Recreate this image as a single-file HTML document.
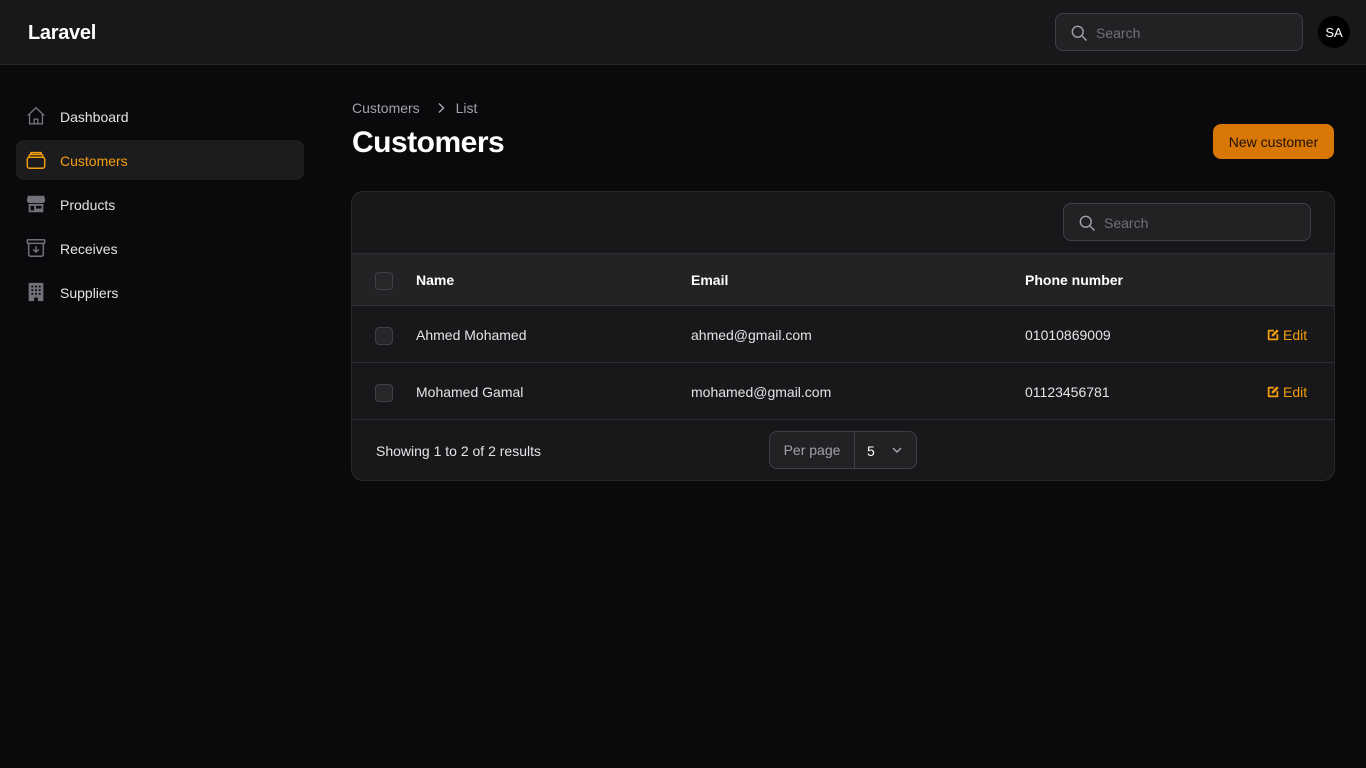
<!DOCTYPE html>
<html><head><meta charset="utf-8">
<style>
*{box-sizing:border-box;margin:0;padding:0}
body{width:1366px;height:768px;background:#0a0a0c;font-family:"Liberation Sans",sans-serif;color:#fff;position:relative;overflow:hidden;font-size:14px}
.top{position:absolute;left:0;top:0;width:1366px;height:65px;background:#18181b;border-bottom:1px solid #27272a}
.logo{position:absolute;left:28px;top:22px;font-size:20px;font-weight:bold;letter-spacing:-0.3px}
.tsearch{position:absolute;left:1055px;top:13px;width:248px;height:38px;border:1px solid #3f3f46;border-radius:8px;background:#222225}
.ph{position:absolute;color:#71717a;font-size:14px}
.av{position:absolute;left:1318px;top:16px;width:32px;height:32px;border-radius:50%;background:#000;font-size:13px;text-align:center;line-height:33px}
.nav{position:absolute;left:16px;width:288px;height:40px;border-radius:8px}
.nav span{position:absolute;left:44px;top:13px;font-size:14px;color:#e4e4e7}
.nav svg{position:absolute;left:9px;top:9px}
.crumb{position:absolute;left:352px;top:100px;color:#a1a1aa;font-size:14px}
h1{position:absolute;left:352px;top:126px;font-size:30px;font-weight:bold;letter-spacing:-0.5px}
.btn{position:absolute;left:1213px;top:124px;width:121px;height:35px;background:#d97706;border-radius:8px;color:#1c1005;font-size:14px;text-align:center;line-height:37px}
.card{position:absolute;left:351px;top:191px;width:984px;height:290px;background:#18181b;border:1px solid #27272a;border-radius:12px;overflow:hidden}
.hdr{position:absolute;left:0;top:61px;width:100%;height:53px;background:#232326;border-top:1px solid #2e2e33;border-bottom:1px solid #2e2e33}
.row{position:absolute;left:0;width:100%;height:57px;border-bottom:1px solid #2e2e33}
.cb{position:absolute;left:23px;width:18px;height:18px;border:1px solid #3f3f46;border-radius:4px;background:#27272a}
.t{position:absolute;font-size:14px;color:#e4e4e7}
.b{font-weight:bold;color:#fff}
.edit{position:absolute;left:914px;color:#f59e0b;font-size:14px}
</style></head><body>
<div class="top">
 <div class="logo">Laravel</div>
 <div class="tsearch">
  <svg style="position:absolute;left:13px;top:9px" width="20" height="20" viewBox="0 0 24 24" fill="none" stroke="#a1a1aa" stroke-width="1.7"><circle cx="10.5" cy="10.5" r="6.5"/><path d="M15.5 15.5L21 21"/></svg>
  <div class="ph" style="left:40px;top:11px">Search</div>
 </div>
 <div class="av">SA</div>
</div>

<div class="nav" style="top:96px"><svg width="22" height="22" viewBox="0 0 24 24" fill="none" stroke="#71717a" stroke-width="1.5"><path d="M3 11.5L12 3l9 8.5M5 10v10.5h14V10M10 20.5v-5h4v5"/></svg><span>Dashboard</span></div>
<div class="nav" style="top:140px;background:#1c1c1f"><svg width="22" height="22" viewBox="0 0 24 24" fill="none" stroke="#f59e0b" stroke-width="1.6"><rect x="2.5" y="9" width="19" height="12" rx="2.5"/><path d="M4.5 9V7.5a1.5 1.5 0 0 1 1.5-1.5h12a1.5 1.5 0 0 1 1.5 1.5V9M6.5 6V4h11v2"/></svg><span style="color:#f59e0b">Customers</span></div>
<div class="nav" style="top:184px"><svg width="22" height="22" viewBox="0 0 24 24" fill="#71717a"><path d="M3 3h18l1 5a3 3 0 0 1-3 3H5a3 3 0 0 1-3-3z"/><path d="M4 12h16v9H4z"/><rect x="6" y="14" width="4" height="5" fill="#0a0a0c"/><rect x="12" y="14" width="6" height="3" fill="#0a0a0c"/></svg><span>Products</span></div>
<div class="nav" style="top:228px"><svg width="22" height="22" viewBox="0 0 24 24" fill="none" stroke="#71717a" stroke-width="1.6"><rect x="2.5" y="3" width="19" height="4" rx="1"/><path d="M4 7v12a2 2 0 0 0 2 2h12a2 2 0 0 0 2-2V7M12 10v6M9 13.5l3 3 3-3"/></svg><span>Receives</span></div>
<div class="nav" style="top:272px"><svg width="22" height="22" viewBox="0 0 24 24" fill="#71717a"><path d="M4 2h16v20h-6v-4h-4v4H4z"/><g fill="#0a0a0c"><rect x="7" y="5" width="2" height="2"/><rect x="11" y="5" width="2" height="2"/><rect x="15" y="5" width="2" height="2"/><rect x="7" y="9" width="2" height="2"/><rect x="11" y="9" width="2" height="2"/><rect x="15" y="9" width="2" height="2"/><rect x="7" y="13" width="2" height="2"/><rect x="11" y="13" width="2" height="2"/><rect x="15" y="13" width="2" height="2"/></g></svg><span>Suppliers</span></div>

<div class="crumb">Customers <svg style="margin:0 10px 0 12px;vertical-align:-1px" width="10" height="12" viewBox="0 0 10 12" fill="none" stroke="#a1a1aa" stroke-width="1.5"><path d="M3 1.5l4.5 4.5L3 10.5"/></svg>List</div>
<h1>Customers</h1>
<div class="btn">New customer</div>

<div class="card">
 <div style="position:absolute;left:711px;top:11px;width:248px;height:38px;border:1px solid #3f3f46;border-radius:8px;background:#222225">
  <svg style="position:absolute;left:13px;top:9px" width="20" height="20" viewBox="0 0 24 24" fill="none" stroke="#a1a1aa" stroke-width="1.7"><circle cx="10.5" cy="10.5" r="6.5"/><path d="M15.5 15.5L21 21"/></svg>
  <div class="ph" style="left:40px;top:11px">Search</div>
 </div>
 <div class="hdr">
  <div class="cb" style="top:18px"></div>
  <div class="t b" style="left:64px;top:18px">Name</div>
  <div class="t b" style="left:339px;top:18px">Email</div>
  <div class="t b" style="left:673px;top:18px">Phone number</div>
 </div>
 <div class="row" style="top:114px">
  <div class="cb" style="top:21px"></div>
  <div class="t" style="left:64px;top:21px">Ahmed Mohamed</div>
  <div class="t" style="left:339px;top:21px">ahmed@gmail.com</div>
  <div class="t" style="left:673px;top:21px">01010869009</div>
  <div class="edit" style="top:21px"><svg style="vertical-align:-2px;margin-right:3px" width="14" height="14" viewBox="0 0 16 16" fill="#f59e0b"><path d="M3 2h6v2H4v8h8V7h2v6a1 1 0 0 1-1 1H3a1 1 0 0 1-1-1V3a1 1 0 0 1 1-1z"/><path d="M12.5 1.5l2 2-6 6H6.5v-2z"/></svg>Edit</div>
 </div>
 <div class="row" style="top:171px">
  <div class="cb" style="top:21px"></div>
  <div class="t" style="left:64px;top:21px">Mohamed Gamal</div>
  <div class="t" style="left:339px;top:21px">mohamed@gmail.com</div>
  <div class="t" style="left:673px;top:21px">01123456781</div>
  <div class="edit" style="top:21px"><svg style="vertical-align:-2px;margin-right:3px" width="14" height="14" viewBox="0 0 16 16" fill="#f59e0b"><path d="M3 2h6v2H4v8h8V7h2v6a1 1 0 0 1-1 1H3a1 1 0 0 1-1-1V3a1 1 0 0 1 1-1z"/><path d="M12.5 1.5l2 2-6 6H6.5v-2z"/></svg>Edit</div>
 </div>
 <div class="t" style="left:24px;top:251px">Showing 1 to 2 of 2 results</div>
 <div style="position:absolute;left:417px;top:239px;width:148px;height:38px;border:1px solid #3f3f46;border-radius:8px;background:#222225">
  <div style="position:absolute;left:0;top:0;width:85px;height:36px;border-right:1px solid #3f3f46;color:#a1a1aa;line-height:37px;text-align:center">Per page</div>
  <div style="position:absolute;left:97px;top:11px">5</div>
  <svg style="position:absolute;left:121px;top:13px" width="12" height="10" viewBox="0 0 12 10" fill="none" stroke="#a1a1aa" stroke-width="1.5"><path d="M2 3l4 4 4-4"/></svg>
 </div>
</div>
</body></html>
